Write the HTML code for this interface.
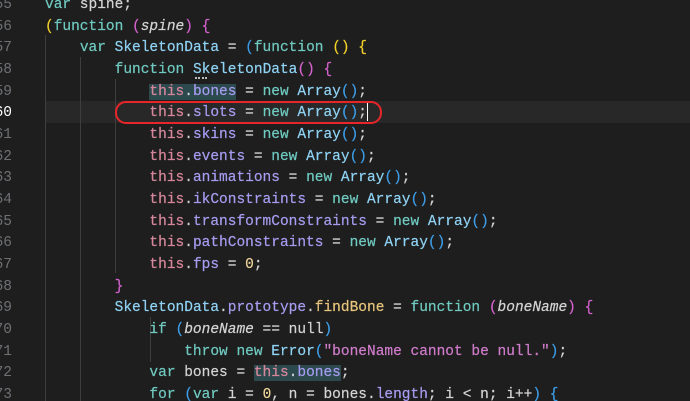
<!DOCTYPE html>
<html><head><meta charset="utf-8"><style>
html,body{margin:0;padding:0;background:#1e1e1e;width:690px;height:401px;overflow:hidden;position:relative}
.code{position:absolute;left:45px;top:-5px;font-family:"Liberation Mono",monospace;font-size:14.5px;line-height:21.67px;color:#d4d4d4;white-space:pre;-webkit-text-stroke:0.2px}
.ln{position:absolute;left:-30px;width:42px;top:-5px;font-family:"Liberation Mono",monospace;font-size:14.5px;line-height:21.67px;color:#6e7074;text-align:right;white-space:pre}
.k{color:#6fcac0}.t{color:#d6879b}.p{color:#a69cf0}.c{color:#8fd3f5}.y{color:#f1d02a}.m{color:#d562cf}.b{color:#3d9ee8}.f{color:#e8c57c}.n{color:#f0d79a}.s{color:#d07ccb}.i{font-style:italic}
.g{position:absolute;width:1px;background:#3e3e3e}
.hl{background:#2c4a4e}
</style></head><body>
<div style="position:absolute;left:45px;right:0;top:101px;height:22px;background:#282828"></div>
<div class="g" style="left:45px;top:35px;height:366px"></div>
<div class="g" style="left:80px;top:57px;height:344px"></div>
<div class="g" style="left:115px;top:79px;height:194px"></div>
<div class="g" style="left:150px;top:317px;height:45px"></div>
<div class="ln">55
56
57
58
59
<span style="color:#fff">60</span>
61
62
63
64
65
66
67
68
69
70
71
72
73</div>
<div class="code"><span class="k">var</span> spine;
<span class="y">(</span><span class="k">function</span> <span class="m">(</span><span class="i">spine</span><span class="m">)</span> <span class="m">{</span>
    <span class="k">var</span> <span class="c">SkeletonData</span> = <span class="b">(</span><span class="k">function</span> <span class="y">()</span> <span class="y">{</span>
        <span class="k">function</span> <span class="c">SkeletonData</span><span class="m">()</span> <span class="m">{</span>
            <span class="hl"><span class="t">this</span>.<span class="p">bones</span></span> = <span class="k">new</span> <span class="c">Array</span><span class="b">()</span>;
            <span class="t">this</span>.<span class="p">slots</span> = <span class="k">new</span> <span class="c">Array</span><span class="b">()</span>;
            <span class="t">this</span>.<span class="p">skins</span> = <span class="k">new</span> <span class="c">Array</span><span class="b">()</span>;
            <span class="t">this</span>.<span class="p">events</span> = <span class="k">new</span> <span class="c">Array</span><span class="b">()</span>;
            <span class="t">this</span>.<span class="p">animations</span> = <span class="k">new</span> <span class="c">Array</span><span class="b">()</span>;
            <span class="t">this</span>.<span class="p">ikConstraints</span> = <span class="k">new</span> <span class="c">Array</span><span class="b">()</span>;
            <span class="t">this</span>.<span class="p">transformConstraints</span> = <span class="k">new</span> <span class="c">Array</span><span class="b">()</span>;
            <span class="t">this</span>.<span class="p">pathConstraints</span> = <span class="k">new</span> <span class="c">Array</span><span class="b">()</span>;
            <span class="t">this</span>.<span class="p">fps</span> = <span class="n">0</span>;
        <span class="m">}</span>
        <span class="c">SkeletonData</span>.<span class="p">prototype</span>.<span class="f">findBone</span> = <span class="k">function</span> <span class="m">(</span><span class="i">boneName</span><span class="m">)</span> <span class="m">{</span>
            <span class="k">if</span> <span class="b">(</span><span class="i">boneName</span> == null<span class="b">)</span>
                <span class="k">throw</span> <span class="k">new</span> <span class="c">Error</span><span class="b">(</span><span class="s">"boneName cannot be null."</span><span class="b">)</span>;
            <span class="k">var</span> bones = <span class="hl"><span class="t">this</span>.<span class="p">bones</span></span>;
            <span class="k">for</span> <span class="b">(</span><span class="k">var</span> i = <span class="n">0</span>, n = bones.<span class="p">length</span>; i &lt; n; i++<span class="b">)</span> <span class="b">{</span></div>
<div style="position:absolute;left:195px;top:77px;width:12px;height:2px;border-top:2px dotted #bbb"></div>
<div style="position:absolute;left:367px;top:103px;width:1px;height:18px;background:#fff"></div>
<div style="position:absolute;left:115px;top:101px;width:263px;height:19px;border:2.5px solid #e8262a;border-radius:11px"></div>
</body></html>
